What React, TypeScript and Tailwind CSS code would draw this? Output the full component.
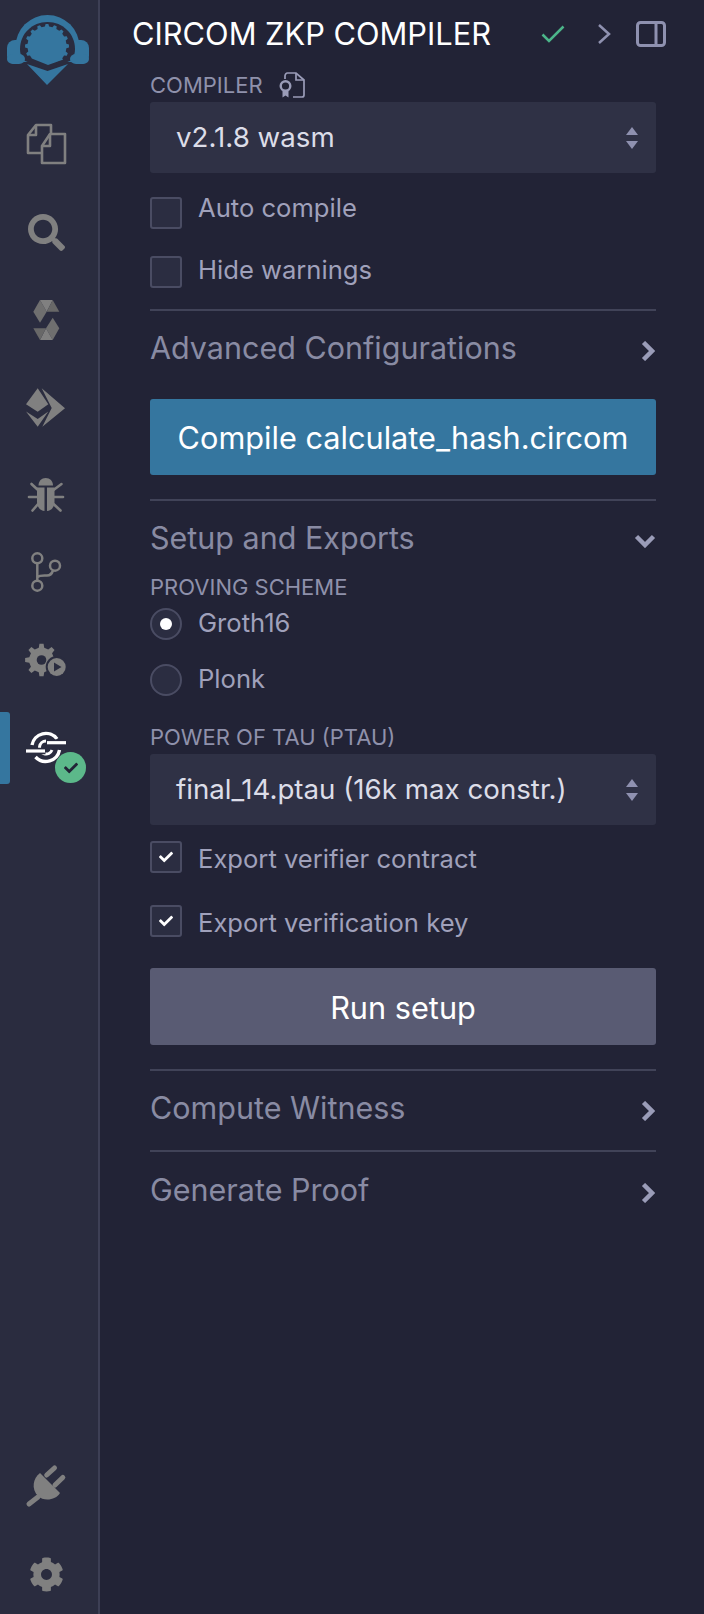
import React from 'react'
import { FaSearch, FaCog, FaCheck } from 'react-icons/fa'

// builds a cog outline around cx,cy
const gearPath = (cx: number, cy: number, rOut: number, rIn: number, teeth: number) => {
  const pts: string[] = []
  const step = (Math.PI * 2) / teeth
  for (let i = 0; i < teeth; i++) {
    const a = i * step - Math.PI / 2
    const corners: [number, number][] = [
      [a - step * 0.28, rIn],
      [a - step * 0.16, rOut],
      [a + step * 0.16, rOut],
      [a + step * 0.28, rIn],
    ]
    corners.forEach(([t, r]) => {
      pts.push(`${(cx + Math.cos(t) * r).toFixed(2)},${(cy + Math.sin(t) * r).toFixed(2)}`)
    })
  }
  return `M${pts.join('L')}Z`
}

const Logo = () => (
  <svg width="100" height="100" viewBox="0 0 100 100">
    <defs>
      <clipPath id="gearClip">
        <path d="M20 20H76V55L48 65 28 57 20 54Z" />
      </clipPath>
    </defs>
    <path d="M15.500 47A32 32 0 0 1 79.500 47V62H15.500Z" fill="#35769f" />
    <rect x="7" y="40" width="20" height="24" rx="8" fill="#35769f" />
    <rect x="68" y="40" width="21" height="24" rx="8" fill="#35769f" />
    <path d="M20 49C20 34 32 22 47.500 22S75 34 75 49C75 53 74 57 71 60.500L47.500 70 24 60.500C21 57 20 53 20 49Z" fill="#2a2c3f" />
    <path d="M15 62H80V66H15Z" fill="#2a2c3f" />
    <rect x="7" y="54" width="18" height="10" rx="6" fill="#35769f" />
    <rect x="70" y="54" width="19" height="10" rx="6" fill="#35769f" />
    <path d={gearPath(47, 46, 22, 19.500, 16)} fill="#35769f" clipPath="url(#gearClip)" />
    <path d="M27 64 47.500 71 68 64 47 85Z" fill="#35769f" />
  </svg>
)

const FilesIcon = () => (
  <svg width="60" height="60" viewBox="17 114 60 60" fill="none" stroke="#808080" strokeWidth="2.600" strokeLinejoin="round">
    <path d="M42 153H28V135L36 125H51V134" />
    <path d="M28 135H36V125" />
    <path d="M42 146L50 134H65V163H42Z" />
    <path d="M42 146H50V134" />
  </svg>
)

const SolidityIcon = () => (
  <svg width="60" height="60" viewBox="17 290 60 60">
    <path d="M33.300 311.700 40 300 46.700 311.700 40 322.700Z" fill="#6f6f6f" />
    <path d="M40 300H52.700L46.700 311.700Z" fill="#808080" />
    <path d="M52.700 300 59.300 311.700H46.700Z" fill="#686868" />
    <path d="M52.700 317.700 59.300 328.300 52.700 340 46 328.300Z" fill="#6f6f6f" />
    <path d="M40 340H52.700L46 328.300Z" fill="#808080" />
    <path d="M33.300 328.300H46L40 340Z" fill="#686868" />
  </svg>
)

const EthIcon = () => (
  <svg width="60" height="60" viewBox="17 378 60 60" fill="#808080">
    <path d="M37.700 388.300 26 404.300 37.700 411.700 48.300 404.300Z" />
    <path d="M26 411.500 37.700 419 48.300 411.500 37.700 426.700Z" />
    <path d="M41.700 388.300 65 408.300 42.300 426.700 51.700 408Z" />
  </svg>
)

const BugIcon = () => (
  <svg width="60" height="60" viewBox="17 466 60 60">
    <path d="M38.500 485.500C38.500 481 41.500 478 45.700 478S53 481 53 485.500Z" fill="#808080" />
    <path d="M37 487.500H44.500V511C40 510.500 37 507 37 502Z" fill="#808080" />
    <path d="M47 487.500H54.500V502C54.500 507 51.500 510.500 47 511Z" fill="#808080" />
    <g fill="none" stroke="#808080" strokeWidth="2.600" strokeLinecap="round">
      <path d="M31.500 484 38 490" />
      <path d="M61.500 484 53.500 490" />
      <path d="M29 497H38" />
      <path d="M63 497H53.500" />
      <path d="M32.500 510.500 38.500 503.500" />
      <path d="M60.500 510.500 53 503.500" />
    </g>
  </svg>
)

const GitIcon = () => (
  <svg width="60" height="60" viewBox="17 542 60 60" fill="none" stroke="#808080" strokeWidth="2.500">
    <circle cx="37.300" cy="558.300" r="5" />
    <circle cx="55" cy="565.700" r="5" />
    <circle cx="37.300" cy="585.700" r="5" />
    <path d="M37.300 563.300V580.700" />
    <path d="M37.300 577C40 575 44 575.500 47 575.500 50 575.500 52 573.500 53 570.500" />
  </svg>
)

const GearRunIcon = () => (
  <svg width="60" height="60" viewBox="17 630 60 60">
    <path d={gearPath(41.500, 660, 16.500, 12.500, 8)} fill="#808080" />
    <circle cx="41.500" cy="660" r="4.800" fill="#2a2c3f" />
    <circle cx="56.700" cy="667" r="11" fill="#2a2c3f" />
    <circle cx="56.700" cy="667" r="9" fill="#808080" />
    <path d="M54 662.500 61.500 667 54 671.500Z" fill="#2a2c3f" />
  </svg>
)

const CircomIcon = () => (
  <svg width="60" height="60" viewBox="17 718 60 60" fill="none" stroke="#ffffff" strokeWidth="3.400">
    <path d="M32 745A14 14 0 0 1 57 739" />
    <path d="M35.500 757A14 14 0 0 0 59.500 750" />
    <path d="M46 741A6.500 6.500 0 1 0 52 750" strokeWidth="3" />
    <path d="M24 751H45.500" stroke="#2a2c3f" strokeWidth="6.500" />
    <path d="M46.500 742.700H68" stroke="#2a2c3f" strokeWidth="6.500" />
    <path d="M26 751H45" strokeWidth="3.200" />
    <path d="M47 742.700H66" strokeWidth="3.200" />
  </svg>
)

const PlugIcon = () => (
  <svg width="60" height="60" viewBox="17 1457 60 60">
    <path d="M40 1473 60 1493C56 1500 44 1502 38 1496 31 1489 33 1478 40 1473Z" fill="#808080" />
    <g fill="none" stroke="#808080" strokeWidth="5" strokeLinecap="round">
      <path d="M46.700 1475 54.500 1468" />
      <path d="M55 1485 62.800 1477.500" />
      <path d="M38 1497 29 1504" />
    </g>
  </svg>
)

const PanelIcon = () => (
  <svg width="30" height="26" viewBox="0 0 30 26" fill="none" stroke="#8f91b0" strokeWidth="3">
    <rect x="1.500" y="1.500" width="27" height="23" rx="3" />
    <path d="M20 1.500V24.500" />
  </svg>
)

const CertIcon = () => (
  <svg width="26" height="26" viewBox="0 0 26 26" fill="none" stroke="#9a9cb8" strokeWidth="1.700">
    <path d="M6 7V4C6 2.500 7 1 8.500 1H17L25 8V23C25 24 24 25 23 25H14" />
    <path d="M17 1V8H25" />
    <circle cx="6.500" cy="14" r="4.800" strokeWidth="2.400" />
    <path d="M3.500 19V25.500L6.500 23.500 9.500 25.500V19Z" fill="#9a9cb8" stroke="none" />
  </svg>
)

const SelectArrows = () => (
  <svg width="12" height="22" viewBox="0 0 12 22" fill="#8f91b0">
    <path d="M6 0 12 8H0Z" />
    <path d="M0 14H12L6 22Z" />
  </svg>
)

const SideRow = ({ children, h = 'h-[88px]', className = '' }: { children: React.ReactNode; h?: string; className?: string }) => (
  <div className={`relative flex items-center justify-center pr-[5px] ${h} ${className}`}>{children}</div>
)

const Select = ({ value, className = '' }: { value: string; className?: string }) => (
  <div className={`h-[71px] rounded-[3px] bg-[#2f3145] pl-[26px] pr-[18px] flex items-center justify-between text-[27.700px] text-[#dcdde8] ${className}`}>
    <span>{value}</span>
    <SelectArrows />
  </div>
)

const Check = ({ label, checked = false, textClass = '', className = '' }: { label: string; checked?: boolean; textClass?: string; className?: string }) => (
  <div className={`h-[32px] flex items-center gap-[16px] ${className}`}>
    <div className="w-[32px] h-[32px] rounded-[3px] border-2 border-[#4a4c63] bg-[#2b2d41] flex items-center justify-center">
      {checked && <FaCheck size={14} color="#ffffff" />}
    </div>
    <span className={`text-[25.600px] text-[#a0a1bb] ${textClass}`}>{label}</span>
  </div>
)

const Radio = ({ label, checked = false, className = '' }: { label: string; checked?: boolean; className?: string }) => (
  <div className={`h-[32px] flex items-center gap-[16px] ${className}`}>
    <div className="w-[32px] h-[32px] rounded-full border-2 border-[#4a4c63] bg-[#2b2d41] flex items-center justify-center">
      {checked && <div className="w-[12px] h-[12px] rounded-full bg-white" />}
    </div>
    <span className="text-[25.600px] text-[#a0a1bb] mb-[2px]">{label}</span>
  </div>
)

const Section = ({ title, open = false, className = '' }: { title: string; open?: boolean; className?: string }) => (
  <div className={`flex items-center justify-between text-[30.500px] text-[#898ba3] ${className}`}>
    <span>{title}</span>
    {open ? (
      <svg width="22" height="14" viewBox="0 0 22 14" fill="none" stroke="#9a9cb8" strokeWidth="4.500" className="mt-[5px]">
        <path d="M2.500 2.500 11 11 19.500 2.500" />
      </svg>
    ) : (
      <svg width="14" height="20" viewBox="0 0 14 20" fill="none" stroke="#9a9cb8" strokeWidth="4.500" className="mt-[5px] mr-[1px]">
        <path d="M2.500 1.500 11 10 2.500 18.500" />
      </svg>
    )}
  </div>
)

const Label = ({ children, className = '' }: { children: React.ReactNode; className?: string }) => (
  <div className={`flex items-center text-[22px] text-[#8f91ab] ${className}`}>{children}</div>
)

const Divider = ({ className = '' }: { className?: string }) => <div className={`h-[2px] bg-[#414358] ${className}`} />

export default function App() {
  return (
    <div className="w-[704px] h-[1614px] flex bg-[#222336] font-['Inter',sans-serif] overflow-hidden">
      <div className="w-[100px] h-full shrink-0 flex flex-col bg-[#2a2c3f] border-r-2 border-[#3d3f55]">
        <Logo />
        <SideRow><FilesIcon /></SideRow>
        <SideRow><FaSearch size={37} color="#808080" /></SideRow>
        <SideRow><SolidityIcon /></SideRow>
        <SideRow><EthIcon /></SideRow>
        <SideRow><BugIcon /></SideRow>
        <SideRow className="-mt-[12px]"><GitIcon /></SideRow>
        <SideRow><GearRunIcon /></SideRow>
        <SideRow>
          <div className="absolute left-0 top-[8px] w-[10px] h-[72px] rounded-r-[3px] bg-[#35769f]" />
          <CircomIcon />
          <div className="absolute left-[55px] top-[48px] w-[31px] h-[31px] rounded-full bg-[#5cb88a] flex items-center justify-center">
            <FaCheck size={14} color="#222336" />
          </div>
        </SideRow>
        <div className="mt-auto">
          <SideRow h="h-[86px]"><PlugIcon /></SideRow>
          <SideRow h="h-[84px]" className="pt-[4px]"><FaCog size={35} color="#808080" /></SideRow>
        </div>
      </div>

      <div className="flex-1 min-w-0">
        <div className="h-[68px] flex items-center pl-[32px] pr-[38px]">
          <span className="text-[30.800px] text-white">CIRCOM ZKP COMPILER</span>
          <svg width="24" height="18" viewBox="0 0 24 18" fill="none" stroke="#4cb58a" strokeWidth="2.500" className="ml-auto">
            <path d="M1.500 9.500 8 16 22.500 1.500" />
          </svg>
          <svg width="14" height="20" viewBox="0 0 14 20" fill="none" stroke="#8f91b0" strokeWidth="2.500" className="ml-[32px]">
            <path d="M2 1 12 10 2 19" />
          </svg>
          <div className="ml-[25px]"><PanelIcon /></div>
        </div>

        <div className="ml-[50px] w-[506px] flex flex-col">
          <Label className="h-[34px] gap-[16px]">COMPILER <CertIcon /></Label>
          <Select value="v2.1.8 wasm" />
          <Check label="Auto compile" textClass="mb-[10px]" className="mt-[24px]" />
          <Check label="Hide warnings" textClass="mb-[3px]" className="mt-[27px]" />
          <Divider className="mt-[21px]" />
          <Section title="Advanced Configurations" className="h-[74px]" />
          <div className="mt-[14px] pt-[2px] h-[76px] rounded-[3px] bg-[#35769f] flex items-center justify-center text-[30.700px] text-white">
            Compile calculate_hash.circom
          </div>
          <Divider className="mt-[24px]" />
          <Section title="Setup and Exports" open className="h-[74px]" />
          <Label className="h-[24px]">PROVING SCHEME</Label>
          <Radio label="Groth16" checked className="mt-[9px]" />
          <Radio label="Plonk" className="mt-[24px]" />
          <Label className="h-[24px] mt-[29px]">POWER OF TAU (PTAU)</Label>
          <Select value="final_14.ptau (16k max constr.)" className="mt-[5px]" />
          <Check label="Export verifier contract" checked textClass="mt-[5px]" className="mt-[16px]" />
          <Check label="Export verification key" checked textClass="mt-[5px]" className="mt-[32px]" />
          <div className="mt-[31px] pt-[3px] h-[77px] rounded-[3px] bg-[#595b73] flex items-center justify-center text-[30.700px] text-white">
            Run setup
          </div>
          <Divider className="mt-[24px]" />
          <Section title="Compute Witness" className="h-[74px]" />
          <Divider className="mt-[5px]" />
          <Section title="Generate Proof" className="h-[76px]" />
        </div>
      </div>
    </div>
  )
}
